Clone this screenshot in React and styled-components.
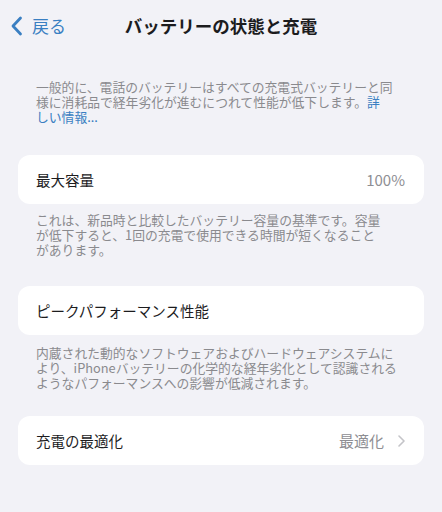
import React from 'react';
import styled, { createGlobalStyle } from 'styled-components';

const Global = createGlobalStyle`
  html, body {
    margin: 0;
    padding: 0;
    background: #f2f2f7;
  }
  body {
    font-family: "Noto Sans CJK JP", "Noto Sans", sans-serif;
    -webkit-font-smoothing: antialiased;
  }
`;

const Screen = styled.div`
  width: 442px;
  height: 512px;
  background: #f2f2f7;
  overflow: hidden;
`;

const NavBar = styled.div`
  display: grid;
  grid-template-columns: 1fr auto 1fr;
  align-items: center;
  height: 52px;
  padding: 0 10px;
`;

const Back = styled.div`
  display: flex;
  align-items: center;
  gap: 9px;
  color: #3a7fc2;
  font-size: 17px;
  line-height: 20px;
`;

const Title = styled.div`
  font-size: 17.5px;
  font-weight: 700;
  color: #1c1c1e;
  line-height: 20px;
`;

const Content = styled.div`
  padding: 0 18px;
`;

const Note = styled.p`
  margin: ${p => p.$top}px 0 0;
  padding: 0 18px;
  font-size: 12.8px;
  line-height: 15px;
  color: #8a8a8e;
  white-space: nowrap;
`;

const Link = styled.span`
  color: #3a7fc2;
`;

const Card = styled.div`
  margin-top: ${p => p.$top}px;
  height: 49px;
  background: #ffffff;
  border-radius: 12px;
  display: flex;
  align-items: center;
  justify-content: space-between;
  padding: 0 19px 0 18px;
`;

const Label = styled.span`
  font-size: 14.5px;
  color: #1c1c1e;
`;

const Value = styled.span`
  display: flex;
  align-items: center;
  gap: 14px;
  font-size: 15px;
  color: #8e8e93;
`;

const ChevronLeft = () => (
  <svg width="13" height="20" viewBox="0 0 13 20">
    <path d="M10.5 2 L3 10 L10.5 18" fill="none" stroke="#3a7fc2" strokeWidth="2.8" strokeLinecap="round" strokeLinejoin="round" />
  </svg>
);

const ChevronRight = () => (
  <svg width="7" height="12" viewBox="0 0 7 12">
    <path d="M1 1 L6 6 L1 11" fill="none" stroke="#c4c4c8" strokeWidth="1.6" strokeLinecap="round" strokeLinejoin="round" />
  </svg>
);

export default function App() {
  return (
    <Screen>
      <Global />
      <NavBar>
        <Back>
          <ChevronLeft />
          <span>戻る</span>
        </Back>
        <Title>バッテリーの状態と充電</Title>
        <div />
      </NavBar>
      <Content>
        <Note $top={27}>
          一般的に、電話のバッテリーはすべての充電式バッテリーと同<br />
          様に消耗品で経年劣化が進むにつれて性能が低下します。<Link>詳</Link><br />
          <Link>しい情報...</Link>
        </Note>
        <Card $top={31}>
          <Label>最大容量</Label>
          <Value>100%</Value>
        </Card>
        <Note $top={8}>
          これは、新品時と比較したバッテリー容量の基準です。容量<br />
          が低下すると、1回の充電で使用できる時間が短くなること<br />
          があります。
        </Note>
        <Card $top={29}>
          <Label>ピークパフォーマンス性能</Label>
        </Card>
        <Note $top={10}>
          内蔵された動的なソフトウェアおよびハードウェアシステムに<br />
          より、iPhoneバッテリーの化学的な経年劣化として認識される<br />
          ようなパフォーマンスへの影響が低減されます。
        </Note>
        <Card $top={26}>
          <Label>充電の最適化</Label>
          <Value>
            最適化
            <ChevronRight />
          </Value>
        </Card>
      </Content>
    </Screen>
  );
}
